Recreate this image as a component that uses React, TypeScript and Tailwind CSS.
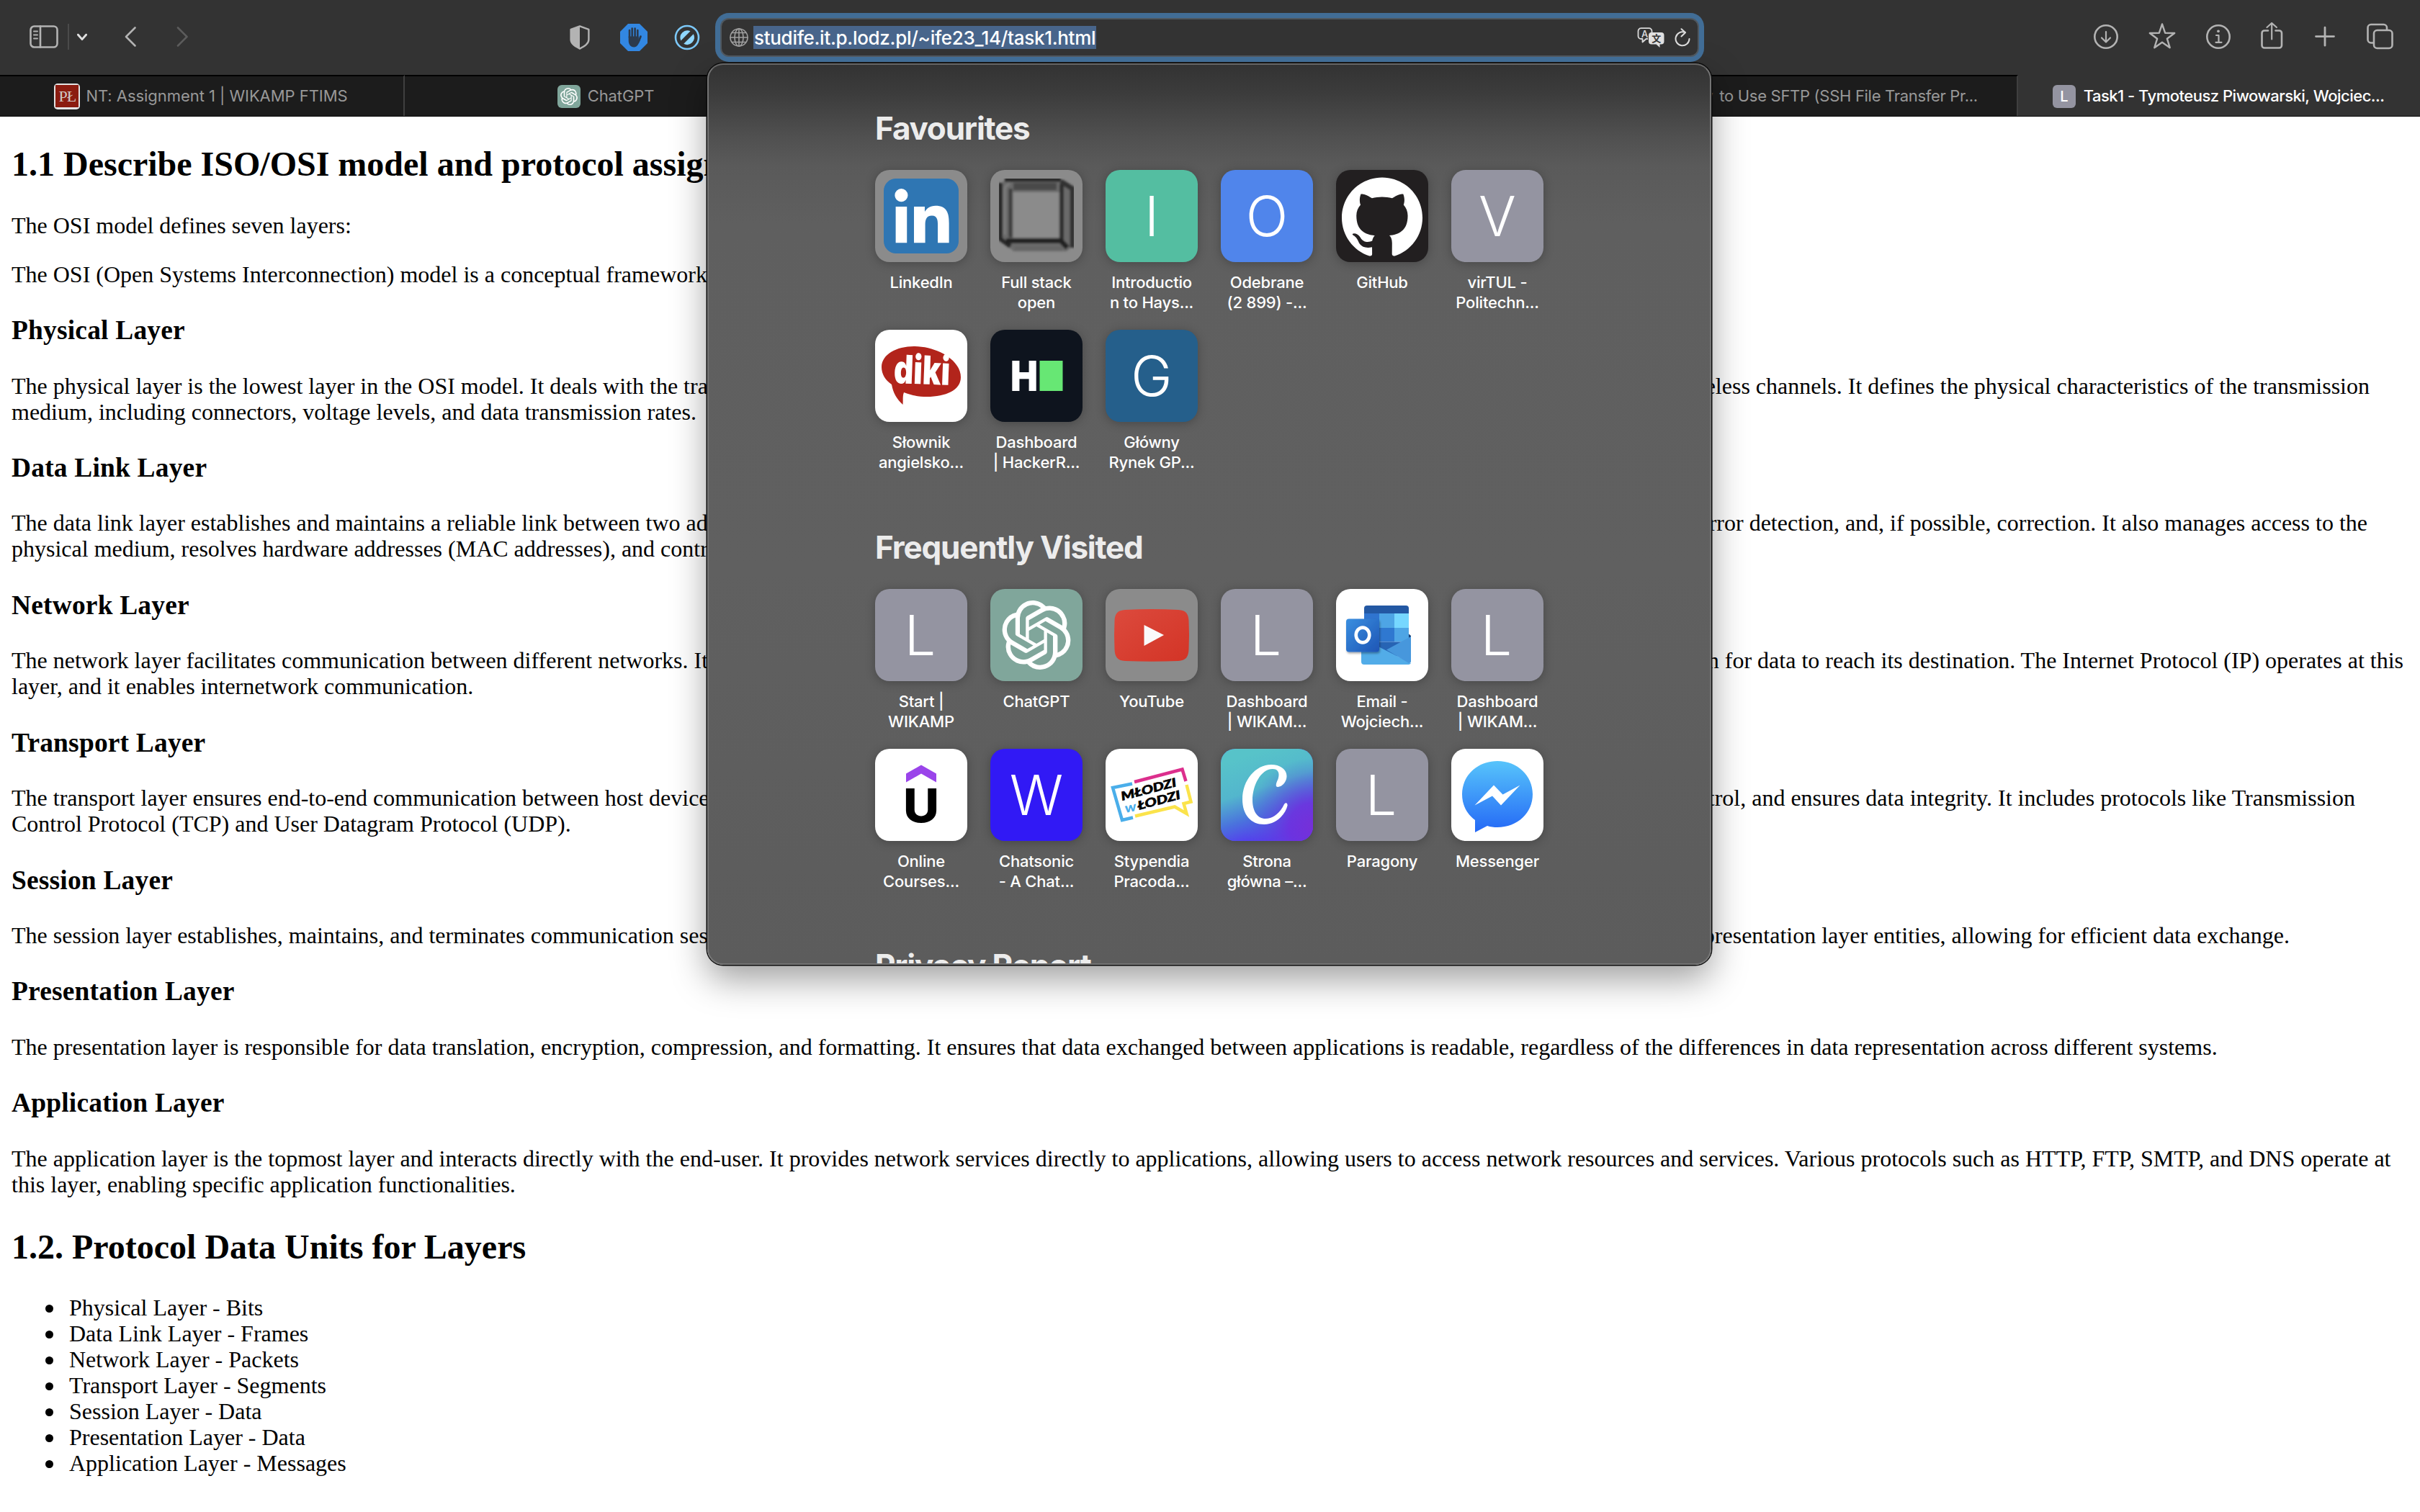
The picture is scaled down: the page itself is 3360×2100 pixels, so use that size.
import type { ReactNode } from "react";
import { FaLinkedinIn } from "react-icons/fa";
import { SiGithub, SiOpenai } from "react-icons/si";

/* ---------- toolbar icons ---------- */

const line = {
  fill: "none",
  stroke: "currentColor",
  strokeWidth: 2.6,
  strokeLinecap: "round" as const,
  strokeLinejoin: "round" as const,
};

const SidebarIcon = () => (
  <svg viewBox="0 0 40 32" className="h-8 w-10" {...line}>
    <rect x="1.5" y="1.5" width="37" height="29" rx="5" />
    <path d="M15 1.5v29" />
    <path d="M6 8.5h5M6 13.5h5M6 18.5h5" strokeWidth="2" />
  </svg>
);

const Chevron = ({ d, className, width }: { d: string; className: string; width?: number }) => (
  <svg viewBox="0 0 40 40" className={className} {...line} strokeWidth={width ?? 2.6}>
    <path d={d} />
  </svg>
);

const ShieldIcon = () => (
  <svg viewBox="0 0 28 34" className="h-[34px] w-7 text-[#b3b3b3]">
    <path
      d="M14 1.4 L26.4 5.8 V20 C26.4 26 20 29.500 14 32.600 C8 29.500 1.600 26 1.600 20 V5.800 Z"
      fill="none"
      stroke="currentColor"
      strokeWidth="2.400"
      strokeLinejoin="round"
    />
    <path d="M14 1 V33 C8 30 1 26.500 1 20 V5.500 Z" fill="currentColor" />
  </svg>
);

const HandIcon = () => (
  <svg viewBox="0 0 38 38" className="size-[38px]">
    <path d="M11 0h16l11 11v16L27 38H11L0 27V11Z" fill="#3287e2" />
    <g stroke="#2c3a4c" strokeWidth="2.600" strokeLinecap="round" fill="none">
      <path d="M13 9v10M16.700 6.500v12M20.600 6.500v12M24.300 9v11" />
      <path d="M28.500 17.500 L25.500 24.500" />
    </g>
    <path
      d="M11.700 17.500h13.900v4.500l2.500-4.500 1.500 1c-1.500 3.500-2.500 7-4.500 10-1.500 2.500-3.500 4-6 4-4.500 0-7.400-4-7.400-9Z"
      fill="#2c3a4c"
    />
  </svg>
);

const BlockerIcon = () => (
  <svg viewBox="0 0 36 36" className="size-9">
    <circle cx="18" cy="18" r="16" fill="none" stroke="#7cc8f8" strokeWidth="2.600" />
    <path d="M9.300 22.500 A10 10 0 0 1 22.500 9.300 Z" fill="#8fd7ff" />
    <path d="M13.300 26.800 A10 10 0 0 0 26.800 13.300 Z" fill="#8fd7ff" />
  </svg>
);

const GlobeIcon = () => (
  <svg viewBox="0 0 26 26" className="size-[26px] text-[#a0a0a0]" {...line} strokeWidth={1.600}>
    <circle cx="13" cy="13" r="12" />
    <ellipse cx="13" cy="13" rx="6" ry="12" />
    <path d="M13 1v24M1 13h24M3.500 6.500h19M3.500 19.500h19" />
  </svg>
);

const TranslateIcon = () => (
  <svg viewBox="0 0 38 28" className="h-7 w-[38px]">
    <path
      d="M5 1.200h11.500a4 4 0 0 1 4 4v8M15 16l-2.500 0-5 4.500v-4.500h-2a4 4 0 0 1-4-4V5.200a4 4 0 0 1 4-4"
      fill="none"
      stroke="#d8d8d8"
      strokeWidth="1.800"
      strokeLinejoin="round"
    />
    <path d="M20 7h13.500a4 4 0 0 1 4 4v8.500a4 4 0 0 1-4 4h-2V28l-5-4.500H20a4 4 0 0 1-4-4V11a4 4 0 0 1 4-4Z" fill="#e0e0e0" />
    <text x="10.500" y="13.500" fontSize="13" fontWeight="500" textAnchor="middle" fill="#e0e0e0" fontFamily="Inter, sans-serif">
      A
    </text>
    <text x="26.800" y="20" fontSize="13" fontWeight="700" textAnchor="middle" fill="#333" fontFamily="'Noto Sans CJK SC', sans-serif">
      文
    </text>
  </svg>
);

const ReloadIcon = () => (
  <svg viewBox="0 0 22 26" className="h-[26px] w-[22px] text-[#dcdcdc]" {...line} strokeWidth={2}>
    <path d="M14.500 6 A9.500 9.500 0 1 0 20.500 15" />
    <path d="M9.500 1.200 L15 6.200 L9.500 11.500" />
  </svg>
);

const DownloadIcon = () => (
  <svg viewBox="0 0 40 40" className="size-10" {...line}>
    <circle cx="20" cy="20" r="15.700" />
    <path d="M20 13v14M14 21.500l6 6 6-6" strokeWidth="2.200" />
  </svg>
);

const StarIcon = () => (
  <svg viewBox="0 0 40 40" className="size-10" {...line} strokeWidth={2.400}>
    <path d="M20 2.500l4.200 12.300 13 .200-10.300 7.800 3.800 12.400L20 27.800 9.300 35.200l3.800-12.400L2.800 15l13-.2Z" />
  </svg>
);

const InfoIcon = () => (
  <svg viewBox="0 0 40 40" className="size-10" {...line}>
    <circle cx="20" cy="20" r="15.700" />
    <path d="M17 18h3.500v9.500M16.500 27.800h8" strokeWidth="2.200" />
    <circle cx="20" cy="12.300" r="1.900" fill="currentColor" stroke="none" />
  </svg>
);

const ShareIcon = () => (
  <svg viewBox="0 0 40 40" className="size-10" {...line}>
    <path d="M15 11.500h-5a3.500 3.500 0 0 0-3.500 3.500v17a3.500 3.500 0 0 0 3.500 3.500h20.500a3.500 3.500 0 0 0 3.500-3.500V15a3.500 3.500 0 0 0-3.500-3.500h-5" />
    <path d="M20.200 23.500V1.500M13.500 7l6.700-6 6.700 6" strokeWidth="2.200" />
  </svg>
);

const PlusIcon = () => (
  <svg viewBox="0 0 40 40" className="size-10" {...line} strokeWidth={2.800}>
    <path d="M20 7.200v25M7.500 19.600h25" />
  </svg>
);

const TabsIcon = () => (
  <svg viewBox="0 0 40 40" className="size-10" {...line}>
    <path d="M11 28.500H8A4.500 4.500 0 0 1 3.500 24V7.500A4.500 4.500 0 0 1 8 3h17.500A4.500 4.500 0 0 1 30 7.500V10" />
    <rect x="12" y="11" width="25.500" height="25" rx="4.500" />
  </svg>
);

/* ---------- tiles ---------- */

const Letter = ({ c }: { c: string }) => (
  <div className="flex size-full items-center justify-center text-[77px] leading-[128px] font-light text-white">
    <span className={c === "L" ? "-ml-[3px]" : ""}>{c}</span>
  </div>
);

const Linkedin = () => (
  <div className="size-full p-3">
    <div className="size-full rounded-[17px] bg-[#2f76b3] pt-[14px] pl-[15px]">
      <FaLinkedinIn className="h-[86px] w-[76px] text-white" />
    </div>
  </div>
);

const FullStack = () => (
  <svg viewBox="0 0 128 128" className="size-full">
    <defs>
      <filter id="soft" x="-10%" y="-10%" width="120%" height="120%">
        <feGaussianBlur stdDeviation="1.700" />
      </filter>
      <clipPath id="fs">
        <rect x="12" y="12" width="104" height="104" />
      </clipPath>
    </defs>
    <g clipPath="url(#fs)">
      <g filter="url(#soft)" fill="none">
        <path d="M20 14 H98 L114 26 V106 L106 113 H32 L14 96 V20 Z" fill="#6a6a6a" />
        <path d="M20 13.500 H98 M14 18 V96 L28 106" stroke="#262626" strokeWidth="6" />
        <path d="M98 16 L114 26 V108" stroke="#333" strokeWidth="7" />
        <path d="M32 23 H92" stroke="#4a4a4a" strokeWidth="10" />
        <path d="M28 26 V94" stroke="#3c3c3c" strokeWidth="5" />
        <path d="M99 20 V98" stroke="#2e2e2e" strokeWidth="6" />
        <path d="M22 98.500 H98 L107 108" stroke="#222" strokeWidth="7" />
        <path d="M34 109 H100" stroke="#666" strokeWidth="6" />
        <path d="M20 90 V28 Q20 22 27 19" stroke="#7c7c7c" strokeWidth="3" />
        <path d="M31.500 31 H95.500 V94 H31.500 Z" fill="#8b8b8b" />
      </g>
    </g>
  </svg>
);

const Github = () => (
  <div className="size-full px-2 pt-[9px]">
    <SiGithub className="size-28 text-white" />
  </div>
);

const Diki = () => (
  <svg viewBox="0 0 128 128" className="size-full">
    <path
      d="M54 23 C86 23 119 42 119 66 C119 84 98 93 72 93 C60 93 50 91 40 87 C38 92 39 98 38.500 104 C30 96 25 88 23 76 C14 70 9 61 9 52 C9 34 30 23 54 23Z"
      fill="#b2241b"
    />
    <text
      transform="rotate(2 64 60)"
      x="26"
      y="75.500"
      fontSize="55"
      fontWeight="900"
      fill="#fff"
      textLength="78"
      lengthAdjust="spacingAndGlyphs"
      fontFamily="Inter, sans-serif"
    >
      diki
    </text>
  </svg>
);

const HackerRank = () => (
  <svg viewBox="0 0 128 128" className="size-full">
    <text x="28" y="85" fontSize="58" fontWeight="900" fill="#fff" textLength="38" lengthAdjust="spacingAndGlyphs" fontFamily="Inter, sans-serif">
      H
    </text>
    <rect x="68.500" y="43" width="32" height="42" fill="#67e774" />
  </svg>
);

const ChatGpt = () => (
  <div className="flex size-full items-center justify-center">
    <SiOpenai className="size-24 text-white" />
  </div>
);

const Youtube = () => (
  <svg viewBox="0 0 128 128" className="size-full">
    <defs>
      <linearGradient id="yt" x1="0" y1="0" x2="1" y2="1">
        <stop offset="0" stopColor="#dc4a3d" />
        <stop offset="1" stopColor="#d33426" />
      </linearGradient>
    </defs>
    <path
      d="M27 29 Q64 27 101 29 C112 29.500 115 35 115.500 44 Q116.500 64 115.500 84 C115 95 111 99.500 101 100 Q64 101.500 27 100 C16 99.500 13 94 12.500 84 Q11.500 64 12.500 44 C13 34 17 29.500 27 29Z"
      fill="url(#yt)"
    />
    <path d="M53.500 50 L81 64 L53.500 79Z" fill="#fafafa" />
  </svg>
);

const Outlook = () => (
  <svg viewBox="0 0 128 128" className="size-full">
    <defs>
      <linearGradient id="ol" x1="0" y1="0" x2="1" y2="1">
        <stop offset="0" stopColor="#3a8fe0" />
        <stop offset="1" stopColor="#1e55b5" />
      </linearGradient>
      <filter id="olSh" x="-20%" y="-20%" width="140%" height="150%">
        <feDropShadow dx="1" dy="2" stdDeviation="1.800" floodColor="#000" floodOpacity="0.350" />
      </filter>
    </defs>
    <path d="M39 34V27a4 4 0 0 1 4-4h54a4 4 0 0 1 4 4v7Z" fill="#2358a3" />
    <rect x="39" y="34" width="21" height="56" fill="#2f74cf" />
    <rect x="60" y="34" width="21" height="20" fill="#4ea5e5" />
    <rect x="81" y="34" width="20" height="20" fill="#76d7ff" />
    <rect x="60" y="54" width="21" height="19.500" fill="#2f78d0" />
    <rect x="81" y="54" width="20" height="19.500" fill="#4ea5e5" />
    <rect x="60" y="73.500" width="41" height="20" fill="#2764b4" />
    <path d="M101 62.500l3 2.500v6h-3Z" fill="#173f75" />
    <path d="M35 68 L104 103 a4 4 0 0 1-3.500 2 H39 a4 4 0 0 1-4-4Z" fill="#52ace8" />
    <path d="M104 66 V101.500 L101 103 L70 84.500Z" fill="#4797dc" />
    <rect x="14" y="41.500" width="46" height="46" rx="4" fill="url(#ol)" filter="url(#olSh)" />
    <ellipse cx="37" cy="64" rx="9.300" ry="10.400" fill="none" stroke="#fff" strokeWidth="4.600" />
  </svg>
);

const Udemy = () => (
  <svg viewBox="0 0 128 128" className="size-full">
    <path d="M64 22.500 L85 34.500 V46.500 L64 34.500 L43 46.500 V34.500Z" fill="#9a44ea" />
    <text x="39" y="102" fontSize="64" fontWeight="800" fill="#000" textLength="50" lengthAdjust="spacingAndGlyphs" fontFamily="Inter, sans-serif">
      U
    </text>
  </svg>
);

const Mlodzi = () => (
  <svg viewBox="0 0 128 128" className="size-full">
    <g fill="none" strokeWidth="4.500">
      <path d="M40 46 L106.500 28.500 L111.500 45" stroke="#dc2f8d" />
      <path d="M37 48.500 L10 54 L23 99 L38 95.500" stroke="#4aaeea" />
      <path d="M41 93.500 L96 80.500 L112.500 90 L108.500 76 L118.500 73.500 L112.500 50" stroke="#fbe34b" />
    </g>
    <g fontFamily="Lato, sans-serif" fontWeight="900" fontStyle="italic">
      <text transform="translate(23 72) rotate(-14.800)" fontSize="16.500" stroke="#000" strokeWidth="0.600" textLength="79" lengthAdjust="spacingAndGlyphs">
        MŁODZI
      </text>
      <text transform="translate(46 85) rotate(-15)" fontSize="16.500" stroke="#000" strokeWidth="0.600" textLength="61" lengthAdjust="spacingAndGlyphs">
        ŁODZI
      </text>
      <text transform="translate(28 89) rotate(-12)" fontSize="18" fill="#4aaeea" textLength="16" lengthAdjust="spacingAndGlyphs">
        w
      </text>
    </g>
  </svg>
);

const Canva = () => (
  <svg viewBox="0 0 128 128" className="size-full rounded-[20px]">
    <defs>
      <linearGradient id="cvBase" x1="0.200" y1="0.100" x2="0.500" y2="1">
        <stop offset="0" stopColor="#57c3c9" />
        <stop offset="0.400" stopColor="#53b6cd" />
        <stop offset="0.700" stopColor="#4a72dd" />
        <stop offset="1" stopColor="#5730f2" />
      </linearGradient>
      <radialGradient id="cvPurple" cx="1" cy="0.850" r="0.750">
        <stop offset="0" stopColor="#7630d8" />
        <stop offset="0.350" stopColor="#6d33de" stopOpacity="0.900" />
        <stop offset="1" stopColor="#4a6ad8" stopOpacity="0" />
      </radialGradient>
    </defs>
    <rect width="128" height="128" fill="url(#cvBase)" />
    <rect width="128" height="128" fill="url(#cvPurple)" />
    <path
      d="M79 53 C75 53 77 47 79.500 42 C82 34 80 28 72 28 C55 28 44 52 44 71 C44 87 51 97 62 97 C73 97 83 88 88 77 C90 74 93 75 92.500 79 C90 90 78 105 60 105 C42 105 30 92 30 70 C30 44 48 22 70 22 C83 22 91.500 29 91.500 38 C91.500 46 85 53 79 53Z"
      fill="#fff"
    />
  </svg>
);

const Messenger = () => (
  <svg viewBox="0 0 128 128" className="size-full">
    <defs>
      <linearGradient id="ms" x1="0" y1="0" x2="0" y2="1">
        <stop offset="0" stopColor="#57c4fb" />
        <stop offset="1" stopColor="#2468f6" />
      </linearGradient>
    </defs>
    <path d="M64 17 C92 17 113 37.500 113 63 C113 89 92 109 64 109 C59 109 54 108.500 50 107 L33 116 V99 C21.500 90.500 15 78 15 63 C15 37.500 36 17 64 17Z" fill="url(#ms)" />
    <path d="M32.500 78.500 L59 50.500 L71.500 63.500 L95.500 50.500 L69 78.500 L57 65.500Z" fill="#fff" />
  </svg>
);

type Tile = { label: string; bg: string; icon: ReactNode };

const favourites: Tile[] = [
  { label: "LinkedIn", bg: "bg-[#8b8b8b]", icon: <Linkedin /> },
  { label: "Full stack\nopen", bg: "bg-[#8b8b8b]", icon: <FullStack /> },
  { label: "Introductio\nn to Hays...", bg: "bg-[#54bea1]", icon: <Letter c="I" /> },
  { label: "Odebrane\n(2 899) -...", bg: "bg-[#5085eb]", icon: <Letter c="O" /> },
  { label: "GitHub", bg: "bg-[#221f20]", icon: <Github /> },
  { label: "virTUL -\nPolitechn...", bg: "bg-[#9494a1]", icon: <Letter c="V" /> },
  { label: "Słownik\nangielsko...", bg: "bg-white", icon: <Diki /> },
  { label: "Dashboard\n| HackerR...", bg: "bg-[#0e141e]", icon: <HackerRank /> },
  { label: "Główny\nRynek GP...", bg: "bg-[#255f8b]", icon: <Letter c="G" /> },
];

const frequent: Tile[] = [
  { label: "Start |\nWIKAMP", bg: "bg-[#9494a1]", icon: <Letter c="L" /> },
  { label: "ChatGPT", bg: "bg-[#80a69b]", icon: <ChatGpt /> },
  { label: "YouTube", bg: "bg-[#8b8b8b]", icon: <Youtube /> },
  { label: "Dashboard\n| WIKAM...", bg: "bg-[#9494a1]", icon: <Letter c="L" /> },
  { label: "Email -\nWojciech...", bg: "bg-white", icon: <Outlook /> },
  { label: "Dashboard\n| WIKAM...", bg: "bg-[#9494a1]", icon: <Letter c="L" /> },
  { label: "Online\nCourses...", bg: "bg-white", icon: <Udemy /> },
  { label: "Chatsonic\n- A Chat...", bg: "bg-[#3119f5]", icon: <Letter c="W" /> },
  { label: "Stypendia\nPracoda...", bg: "bg-white", icon: <Mlodzi /> },
  { label: "Strona\ngłówna –...", bg: "bg-[#5a4be0]", icon: <Canva /> },
  { label: "Paragony", bg: "bg-[#9494a1]", icon: <Letter c="L" /> },
  { label: "Messenger", bg: "bg-white", icon: <Messenger /> },
];

const Tiles = ({ items, className }: { items: Tile[]; className: string }) => (
  <div className={`grid w-[928px] grid-cols-[repeat(6,128px)] gap-x-8 gap-y-6 ${className}`}>
    {items.map((t, i) => (
      <div key={i} className="flex h-[198px] flex-col items-center gap-[14px]">
        <div className={`size-32 shrink-0 rounded-[20px] shadow-[0_2px_14px_rgba(0,0,0,0.25)] ${t.bg}`}>{t.icon}</div>
        <div className="text-center text-[22px] leading-7 font-medium tracking-[-0.2px] whitespace-pre text-white">{t.label}</div>
      </div>
    ))}
  </div>
);

const PanelTitle = ({ children }: { children: ReactNode }) => (
  <h2 className="text-[44px] leading-[56px] font-bold tracking-[-1.200px] text-[#ececec]">{children}</h2>
);

const Panel = () => (
  <div className="absolute top-[88px] left-[982px] h-[1252px] w-[1394px] overflow-hidden rounded-[22px] border-2 border-[#747474] border-t-[#666] bg-[linear-gradient(180deg,#333_0px,#3c3c3c_40px,#505050_100px,#5a5a5a_140px,#5f5f5f_220px,#606060_700px,#5c5c5c_1250px)] pt-[60px] pl-[231px] shadow-[0_0_0_1.500px_#0c0c0c,0_20px_50px_rgba(0,0,0,0.380)]">
    <PanelTitle>Favourites</PanelTitle>
    <Tiles items={favourites} className="mt-[30px]" />
    <div className="mt-[76px]">
      <PanelTitle>Frequently Visited</PanelTitle>
    </div>
    <Tiles items={frequent} className="mt-[30px]" />
    <div className="mt-[75px]">
      <PanelTitle>Privacy Report</PanelTitle>
    </div>
  </div>
);

/* ---------- browser chrome ---------- */

const Toolbar = () => (
  <div className="flex h-[104px] items-start bg-[#333] pt-[18px] text-[#b3b3b3]">
    <div className="flex h-[68px] w-[993px] shrink-0 items-center">
      <div className="-mt-[3px] ml-[41px] flex items-center">
        <SidebarIcon />
        <div className="ml-[13px] h-9 w-[2px] bg-[#4a4a4a]" />
        <Chevron className="ml-[2px] size-8 text-[#e0e0e0]" d="M13 16.500 L20 24.500 L27 16.500" width={3.6} />
        <Chevron className="ml-[31px] size-10" d="M26.500 7.500 L14 20 L26.500 32.500" />
        <Chevron className="ml-8 size-10 text-[#5c5c5c]" d="M14 7.500 L26.500 20 L14 32.500" />
      </div>
      <div className="ml-[518px] flex items-center">
        <ShieldIcon />
        <div className="ml-[42px]">
          <HandIcon />
        </div>
        <div className="ml-[37px]">
          <BlockerIcon />
        </div>
      </div>
    </div>
    <div className="relative z-20 h-[68px] w-[1373px] shrink-0 rounded-[19px] bg-[#416d96] p-[7px]">
      <div className="flex size-full items-center rounded-[12px] border-2 border-[#4f5860] bg-[#333] pl-[11px]">
        <GlobeIcon />
        <span className="ml-[7px] h-8 w-[476px] bg-[#48658b] pl-px text-[26px] leading-[33px] font-medium tracking-[-0.290px] whitespace-nowrap text-white">
          studife.it.p.lodz.pl/~ife23_14/task1.html
        </span>
        <div className="ml-auto flex items-center gap-[14px] pr-[10px]">
          <TranslateIcon />
          <ReloadIcon />
        </div>
      </div>
    </div>
    <div className="flex h-[66px] flex-1 items-center">
      <div className="ml-[538px]">
        <DownloadIcon />
      </div>
      <div className="ml-[38px]">
        <StarIcon />
      </div>
      <div className="ml-[38px]">
        <InfoIcon />
      </div>
      <div className="ml-[34px]">
        <ShareIcon />
      </div>
      <div className="ml-[34px]">
        <PlusIcon />
      </div>
      <div className="ml-[36px]">
        <TabsIcon />
      </div>
    </div>
  </div>
);

const Tab = ({ children, active, className = "w-[560px]" }: { children?: ReactNode; active?: boolean; className?: string }) => (
  <div
    className={`flex h-[57px] shrink-0 items-center justify-center text-[22px] whitespace-nowrap ${className} ${
      active
        ? "gap-[11px] bg-[#333] pt-[2px] pr-[2px] font-medium tracking-[-0.500px] text-white"
        : "gap-[10px] border-t-2 border-r-2 border-t-black border-r-[#3f3f3f] bg-[#1c1c1c] tracking-[-0.100px] text-[#989898]"
    }`}
  >
    {children}
  </div>
);

const TabBar = () => (
  <div className="flex h-[58px] border-b-2 border-[#0a0a0a] bg-[#1c1c1c]">
    <Tab className="w-[562px] pr-[2px]">
      <span className="flex size-9 items-center justify-center rounded-[5px] bg-[#e4e4e4]">
        <span className="flex h-[31px] w-8 items-center justify-center bg-[#8b1c10] font-['Liberation_Serif',serif] text-[22px] leading-none tracking-[-1px] text-[#cfc8c6]">PŁ</span>
      </span>
      <span className="-ml-[2px] tracking-[-0.050px]">NT: Assignment 1 | WIKAMP FTIMS</span>
    </Tab>
    <Tab>
      <span className="flex size-8 items-center justify-center rounded-[6px] bg-[#80a69b]">
        <SiOpenai className="size-6 text-white" />
      </span>
      <span>ChatGPT</span>
    </Tab>
    <Tab />
    <Tab />
    <Tab className="w-[560px] pr-[6px]">
      <span className="size-8 rounded-[6px] bg-[#9494a1]" />
      <span className="tracking-[-0.300px]">
        <span className="mr-[3px]">How</span> to Use SFTP (SSH File Transfer Pr...
      </span>
    </Tab>
    <Tab active className="w-[558px]">
      <span className="flex size-8 items-center justify-center rounded-[6px] bg-[#9494a1] text-[20px]">L</span>
      <span>Task1 - Tymoteusz Piwowarski, Wojciec...</span>
    </Tab>
  </div>
);

/* ---------- page ---------- */

const H2 = ({ children, className = "" }: { children: ReactNode; className?: string }) => (
  <h2 className={`my-[39.840px] text-[48px] leading-[54px] font-bold ${className}`}>{children}</h2>
);
const H3 = ({ children }: { children: ReactNode }) => (
  <h3 className="my-[37.440px] pt-[2px] text-[37.440px] leading-[42px] font-bold tracking-[0.200px]">{children}</h3>
);

/* A line whose middle part sits beneath the suggestions panel. */
const Split = ({ left, right, width }: { left: string; right: string; width: string }) => (
  <span className={`flex whitespace-nowrap ${width}`}>
    <span className="w-0 grow overflow-hidden">{left}</span>
    <span className="shrink-0">{right}</span>
  </span>
);

const units = [
  "Physical Layer - Bits",
  "Data Link Layer - Frames",
  "Network Layer - Packets",
  "Transport Layer - Segments",
  "Session Layer - Data",
  "Presentation Layer - Data",
  "Application Layer - Messages",
];

const Page = () => (
  <main className="-mt-px flow-root px-4 font-['Liberation_Serif',serif] text-[32px] leading-9 text-black">
    <H2>1.1 Describe ISO/OSI model and protocol assignment</H2>
    <p className="my-8">The OSI model defines seven layers:</p>
    <p className="my-8">The OSI (Open Systems Interconnection) model is a conceptual framework for network communication.</p>
    <H3>Physical Layer</H3>
    <p className="my-8">
      <Split
        width="w-[3274px]"
        left="The physical layer is the lowest layer in the OSI model. It deals with the transmission of raw bits over"
        right="wireless channels. It defines the physical characteristics of the transmission"
      />
      medium, including connectors, voltage levels, and data transmission rates.
    </p>
    <H3>Data Link Layer</H3>
    <p className="my-8">
      <Split
        width="w-[3271px]"
        left="The data link layer establishes and maintains a reliable link between two adjacent nodes. It handles framing,"
        right="error detection, and, if possible, correction. It also manages access to the"
      />
      physical medium, resolves hardware addresses (MAC addresses), and controls the flow of data.
    </p>
    <H3>Network Layer</H3>
    <p className="my-8">
      <Split
        width="w-[3321px]"
        left="The network layer facilitates communication between different networks. It determines the best"
        right="path for data to reach its destination. The Internet Protocol (IP) operates at this"
      />
      layer, and it enables internetwork communication.
    </p>
    <H3>Transport Layer</H3>
    <p className="my-8">
      <Split
        width="w-[3254px]"
        left="The transport layer ensures end-to-end communication between host devices. It manages"
        right="flow control, and ensures data integrity. It includes protocols like Transmission"
      />
      Control Protocol (TCP) and User Datagram Protocol (UDP).
    </p>
    <H3>Session Layer</H3>
    <p className="my-8">
      <Split
        width="w-[3163px]"
        left="The session layer establishes, maintains, and terminates communication sessions between"
        right="presentation layer entities, allowing for efficient data exchange."
      />
    </p>
    <H3>Presentation Layer</H3>
    <p className="my-8">
      The presentation layer is responsible for data translation, encryption, compression, and formatting. It ensures that data exchanged between applications is readable, regardless of the differences in data
      representation across different systems.
    </p>
    <H3>Application Layer</H3>
    <p className="my-8">
      The application layer is the topmost layer and interacts directly with the end-user. It provides network services directly to applications, allowing users to access network resources and services. Various
      protocols such as HTTP, FTP, SMTP, and DNS operate at this layer, enabling specific application functionalities.
    </p>
    <H2 className="pt-[2px]">1.2. Protocol Data Units for Layers</H2>
    <ul className="my-8 pl-[47px]">
      {units.map((u) => (
        <li key={u} className="flex items-center">
          <span className="mt-[3px] mr-[22px] size-[11px] rounded-full bg-black" />
          {u}
        </li>
      ))}
    </ul>
  </main>
);

export default function App() {
  return (
    <div className="relative h-[2100px] w-[3360px] overflow-hidden bg-white font-['Inter',sans-serif]">
      <Toolbar />
      <TabBar />
      <Page />
      <Panel />
    </div>
  );
}
